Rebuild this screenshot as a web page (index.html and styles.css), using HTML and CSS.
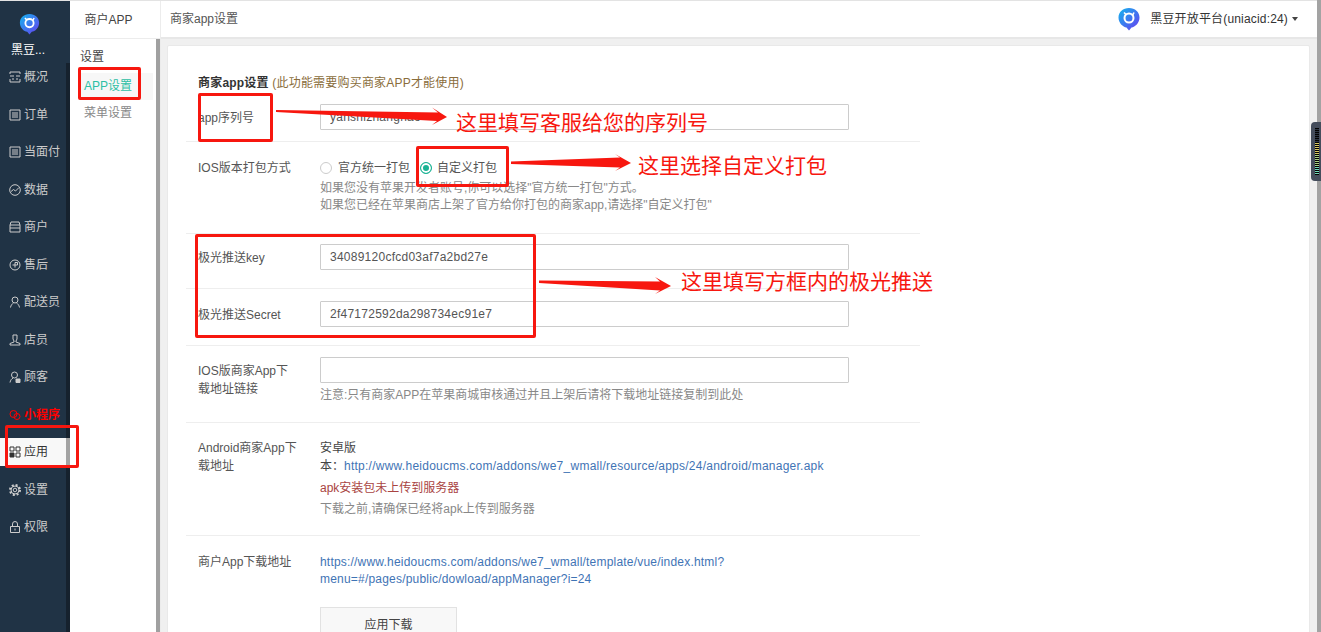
FILE: index.html
```html
<!DOCTYPE html>
<html lang="zh-CN">
<head>
  <meta charset="UTF-8" />
  <meta name="viewport" content="width=device-width, initial-scale=1.0"/>
  <title>商家app设置</title>
  <link rel="stylesheet" href="styles.css">
</head>
<body>

  <svg class="defs" width="0" height="0">
    <defs>
      <linearGradient id="logoGrad" x1="0" y1="0" x2="1" y2="1">
        <stop offset="0" stop-color="#12b5ee"/>
        <stop offset="1" stop-color="#6a3cf0"/>
      </linearGradient>
      <symbol id="logo" viewBox="0 0 22 24">
        <path d="M11 1C5 1 .5 5 .5 10.500S5 20 8.500 20.500L11 23.500L13.500 20.500C17 20 21.500 16 21.500 10.500S17 1 11 1Z" fill="url(#logoGrad)"/>
        <circle cx="11" cy="11" r="4.500" fill="none" stroke="#fff" stroke-width="2"/>
        <path d="M6 5.500l2 2M16 5.500l-1.500 3" stroke="#fff" stroke-width="1.600" fill="none"/>
      </symbol>
    </defs>
  </svg>

  <!-- Menu glowne -->
  <nav class="sidebar">
    <div class="brand">
      <svg class="brand-logo"><use href="#logo"/></svg>
      <div class="brand-name">黑豆...</div>
    </div>
    <ul class="menu">
      <li class="menu-item"><svg class="ico" viewBox="0 0 12 12"><path d="M1 3V1h10v2M1 5h4M7 5h4M1 8v3h10V8M3 8h2M7 8h2"/></svg>概况</li>
      <li class="menu-item"><svg class="ico" viewBox="0 0 12 12"><path d="M1 1h10v10H1zM3 4h6M3 6h6M3 8h6"/></svg>订单</li>
      <li class="menu-item"><svg class="ico" viewBox="0 0 12 12"><path d="M1 1h10v10H1zM3 4h6M3 6h6M3 8h6"/></svg>当面付</li>
      <li class="menu-item"><svg class="ico" viewBox="0 0 12 12"><circle cx="6" cy="6" r="5.300"/><path d="M2 7.500l2.500-2 2 1.500L10 3.500"/></svg>数据</li>
      <li class="menu-item"><svg class="ico" viewBox="0 0 12 12"><path d="M2 1h8l1 3H1zM1 4v7h10V4M1 7h10"/></svg>商户</li>
      <li class="menu-item"><svg class="ico" viewBox="0 0 12 12"><circle cx="6" cy="6" r="5"/><path d="M6 3.500h2.500V6H6zM3.500 6H6v2.500"/></svg>售后</li>
      <li class="menu-item"><svg class="ico" viewBox="0 0 12 12"><circle cx="6" cy="4" r="3"/><path d="M1.500 11.500C2 9 3 8 4.500 7M10.500 11.500C10 9 9 8 7.500 7"/></svg>配送员</li>
      <li class="menu-item"><svg class="ico" viewBox="0 0 12 12"><path d="M4 1h4v4L7 7v1l4 1.500V11H1V9.500L5 8V7L4 5z"/></svg>店员</li>
      <li class="menu-item"><svg class="ico" viewBox="0 0 12 12"><circle cx="5.500" cy="4" r="3"/><path d="M1 11.500C1.500 9 2.500 8 4 7"/><path class="ico-fill" d="M7 8h4v3.500H7z"/></svg>顾客</li>
      <li class="menu-item menu-item-red"><svg class="ico" viewBox="0 0 12 12"><circle cx="4.500" cy="5" r="3.500"/><circle cx="8" cy="7.500" r="3"/></svg>小程序</li>
      <li class="menu-item menu-item-active"><svg class="ico" viewBox="0 0 12 12"><path d="M1 1h4v4H1zM7 1h4v4H7zM7 7h4v4H7z"/><path class="ico-fill" d="M1 7h4v4H1z"/></svg>应用</li>
      <li class="menu-item"><svg class="ico" viewBox="0 0 12 12"><circle cx="6" cy="6" r="1.800"/><circle cx="6" cy="6" r="4"/><circle class="ico-teeth" cx="6" cy="6" r="5"/></svg>设置</li>
      <li class="menu-item"><svg class="ico" viewBox="0 0 12 12"><path d="M1.500 5.500h9V11.500h-9zM3.500 5.500V3a2.500 2.500 0 0 1 5 0v2.500M6 7.500v2"/></svg>权限</li>
    </ul>
  </nav>

  <!-- Menu drugiego poziomu -->
  <aside class="subnav">
    <div class="subnav-title">商户APP</div>
    <div class="subnav-body">
      <div class="subnav-group">设置</div>
      <a class="subnav-link subnav-link-active">APP设置</a>
      <a class="subnav-link">菜单设置</a>
    </div>
  </aside>

  <div class="main">
    <header class="topbar">
      <div class="crumb">商家app设置</div>
      <div class="account">
        <svg class="account-logo"><use href="#logo"/></svg>
        <span class="account-name">黑豆开放平台(uniacid:24)</span>
        <span class="caret"></span>
      </div>
    </header>

    <div class="content">
      <section class="card">
        <h3 class="card-title">商家app设置 <small>(此功能需要购买商家APP才能使用)</small></h3>

        <div class="row row-first">
          <label class="row-label">app序列号</label>
          <div class="row-field"><input class="text-input" type="text" value="yanshizhanghao"></div>
        </div>

        <div class="row row-radio">
          <label class="row-label">IOS版本打包方式</label>
          <div class="row-field">
            <div class="radios">
              <span class="radio"><i class="radio-dot"></i>官方统一打包</span>
              <span class="radio"><i class="radio-dot radio-dot-on"></i>自定义打包</span>
            </div>
            <p class="help">如果您没有苹果开发者账号,你可以选择"官方统一打包"方式。</p>
            <p class="help">如果您已经在苹果商店上架了官方给你打包的商家app,请选择"自定义打包"</p>
          </div>
        </div>

        <div class="row row-key">
          <label class="row-label">极光推送key</label>
          <div class="row-field"><input class="text-input" type="text" value="34089120cfcd03af7a2bd27e"></div>
        </div>

        <div class="row row-secret">
          <label class="row-label">极光推送Secret</label>
          <div class="row-field"><input class="text-input" type="text" value="2f47172592da298734ec91e7"></div>
        </div>

        <div class="row row-ios">
          <label class="row-label row-label-wrap">IOS版商家App下载地址链接</label>
          <div class="row-field">
            <input class="text-input" type="text">
            <p class="help help-below">注意:只有商家APP在苹果商城审核通过并且上架后请将下载地址链接复制到此处</p>
          </div>
        </div>

        <div class="row row-android">
          <label class="row-label row-label-wrap">Android商家App下载地址</label>
          <div class="row-field">
            <p class="line">安卓版</p>
            <p class="line">本：<a class="link">http://www.heidoucms.com/addons/we7_wmall/resource/apps/24/android/manager.apk</a></p>
            <p class="line line-danger">apk安装包未上传到服务器</p>
            <p class="help line-note">下载之前,请确保已经将apk上传到服务器</p>
          </div>
        </div>

        <div class="row row-last">
          <label class="row-label">商户App下载地址</label>
          <div class="row-field">
            <a class="link link-block">https://www.heidoucms.com/addons/we7_wmall/template/vue/index.html?menu=#/pages/public/dowload/appManager?i=24</a>
            <button class="btn">应用下载</button>
          </div>
        </div>
      </section>
    </div>
  </div>

  <!-- Gorny pasek i scrollbar strony -->
  <div class="top-strip"></div>
  <div class="page-scroll"></div>
  <div class="meter"><div class="meter-bars"></div></div>

  <!-- Adnotacje na zrzucie -->
  <div class="mark mark-serial"></div>
  <div class="mark mark-radio"></div>
  <div class="mark mark-push"></div>
  <div class="mark mark-appset"></div>
  <div class="mark mark-apply"></div>

  <svg class="arrows" width="1321" height="632" viewBox="0 0 1321 632">
    <path d="M276 110L438 112.500L432 107.500L447 117L432 125L437 121L276 112Z"/>
    <path d="M511 161.500L620 157.500L615 154L631 163L615 171L620 167.500L511 164Z"/>
    <path d="M539 280.500L660 281.500L655 277L671 286L655 294L660 290.500L539 283Z"/>
  </svg>
  <div class="note note-serial">这里填写客服给您的序列号</div>
  <div class="note note-radio">这里选择自定义打包</div>
  <div class="note note-push">这里填写方框内的极光推送</div>

</body>
</html>
```
FILE: styles.css
```css
* {
  box-sizing: border-box;
}

html, body {
  height: 100%;
}

body {
  margin: 0;
  height: 632px;
  overflow: hidden;
  display: flex;
  background-color: #f0f0f0;
  color: #555;
  font-family: "Liberation Sans", "Noto Sans CJK SC", sans-serif;
  font-size: 12px;
  line-height: 18px;
}

p {
  margin: 0;
}

.defs {
  position: absolute;
}

.top-strip {
  position: absolute;
  top: 0;
  left: 0;
  width: 100%;
  height: 1px;
  background-color: #e3e3e3;
}

.page-scroll {
  position: absolute;
  top: 0;
  right: 0;
  width: 4px;
  height: 632px;
  background-color: #a3a3a3;
}

.meter {
  position: absolute;
  top: 122px;
  right: 0;
  width: 10px;
  height: 59px;
  padding: 6px 0 6px 4px;
  background-color: #454d5c;
  border-radius: 4px 0 0 4px;
}

.meter-bars {
  width: 4px;
  height: 47px;
  background: repeating-linear-gradient(#000 0 1px, transparent 1px 2px),
    linear-gradient(#2b3340 0 30%, #d8c860 30% 55%, #a8d080 55% 80%, #70d8b8 80%);
}

/* sidebar */
.sidebar {
  width: 70px;
  height: 632px;
  flex-shrink: 0;
  background-color: #203345;
  background-image: linear-gradient(#16222e, #16222e);
  background-repeat: no-repeat;
  background-position: 66px 63px;
  background-size: 4px 569px;
  color: #ccc;
}

.brand {
  height: 57px;
  padding-top: 13px;
}

.brand-logo {
  display: block;
  width: 21px;
  height: 22px;
  margin-left: 19px;
}

.brand-name {
  margin-top: 6px;
  padding-left: 11px;
  color: #fff;
  font-size: 12px;
  line-height: 18px;
}

.menu {
  list-style: none;
  margin: 6px 0 0;
  padding: 0;
  width: 66px;
}

.menu-item {
  display: flex;
  align-items: center;
  height: 28px;
  margin-bottom: 9.500px;
  padding-left: 9px;
  white-space: nowrap;
}

.ico {
  width: 12px;
  height: 12px;
  margin-right: 3px;
  flex-shrink: 0;
  fill: none;
  stroke: currentColor;
  stroke-width: 1;
}

.ico-fill {
  fill: currentColor;
}

.ico-teeth {
  stroke-width: 2;
  stroke-dasharray: 2 1.930;
}

.menu-item-red {
  color: #f00;
  font-weight: bold;
}

.menu-item-active {
  background-color: #f8f8f8;
  box-shadow: 4px 0 0 #a3a3a3;
  color: #333;
}

/* subnav */
.subnav {
  width: 91px;
  height: 632px;
  flex-shrink: 0;
  background-color: #fff;
  border-right: 1px solid #ececec;
  color: #555;
}

.subnav-title {
  height: 39px;
  padding: 11px 13px 0 0;
  text-align: center;
  color: #444;
  border-bottom: 1px solid #ececec;
}

.subnav-body {
  height: 593px;
  padding: 9px 3px 0 10px;
  border-right: 4px solid #a0a0a0;
}

.subnav-group {
  margin-bottom: 7px;
  color: #444;
  line-height: 18px;
}

.subnav-link {
  display: block;
  height: 27px;
  padding-left: 4px;
  color: #888;
  line-height: 27px;
}

.subnav-link-active {
  background-color: #f7f7f7;
  color: #2ebfa5;
}

/* main */
.main {
  flex: 1;
  min-width: 0;
  height: 632px;
  display: flex;
  flex-direction: column;
}

.topbar {
  height: 39px;
  flex-shrink: 0;
  display: flex;
  justify-content: space-between;
  align-items: center;
  padding: 0 23px 0 9px;
  background-color: #fff;
  border-bottom: 2px solid #e7e7e7;
  color: #555;
}

.account {
  display: flex;
  align-items: center;
  color: #333;
}

.account-name {
  letter-spacing: .17px;
}

.account-logo {
  width: 22px;
  height: 24px;
  margin-right: 10px;
}

.caret {
  width: 0;
  height: 0;
  margin-left: 4px;
  border-top: 4px solid #444;
  border-left: 3px solid transparent;
  border-right: 3px solid transparent;
}

.content {
  flex: 1;
  min-height: 0;
  padding: 6px 11px 0 6px;
  overflow: hidden;
}

.card {
  width: 1143px;
  height: 700px;
  padding: 28px 0 0 18px;
  background-color: #fff;
  border: 1px solid #e9e9e9;
  border-radius: 2px;
}

.card-title {
  margin: 0 0 4px 12px;
  color: #333;
  font-size: 12px;
  font-weight: bold;
  line-height: 18px;
  letter-spacing: .2px;
}

.card-title small {
  color: #8a6d3b;
  font-size: 12px;
  font-weight: normal;
}

.row {
  display: flex;
  width: 734px;
  padding-left: 12px;
  border-bottom: 1px solid #eee;
}

.row-first {
  padding-top: 8px;
  padding-bottom: 11px;
}

.row-radio {
  padding-top: 17px;
  padding-bottom: 19px;
}

.row-key {
  padding-top: 10px;
  padding-bottom: 18px;
}

.row-secret {
  padding-top: 12px;
  padding-bottom: 18px;
}

.row-ios {
  padding-top: 11px;
  padding-bottom: 18px;
}

.row-android {
  padding-top: 16px;
  padding-bottom: 17px;
}

.row-last {
  padding-top: 17px;
  border-bottom: none;
}

.row-label {
  width: 122px;
  padding-top: 5px;
  flex-shrink: 0;
  color: #555;
  white-space: nowrap;
}

.row-radio .row-label,
.row-android .row-label,
.row-last .row-label {
  padding-top: 0;
}

.row-label-wrap {
  white-space: normal;
  padding-right: 20px;
}

.row-field {
  width: 529px;
}

.text-input {
  display: block;
  width: 529px;
  height: 26px;
  padding: 0 9px;
  border: 1px solid #ccc;
  border-radius: 1px;
  background-color: #fff;
  color: #555;
  font: inherit;
  letter-spacing: .25px;
}

.radios {
  display: flex;
  height: 18px;
  margin-bottom: 3px;
}

.radio {
  display: flex;
  align-items: center;
  margin-right: 10px;
  color: #555;
}

.radio-dot {
  width: 12px;
  height: 12px;
  margin-right: 6px;
  border: 1px solid #ccc;
  border-radius: 50%;
}

.radio-dot-on {
  margin-right: 5px;
  border-color: #1ab394;
  background-color: #1ab394;
  box-shadow: inset 0 0 0 2px #fff;
}

.help {
  color: #888;
  line-height: 17px;
}

.help-below {
  margin-top: 4px;
}

.line {
  color: #444;
  line-height: 18px;
}

.line-danger {
  margin-top: 4px;
  color: #a94442;
}

.line-note {
  margin-top: 3px;
  line-height: 18px;
}

.link {
  color: #3f74b5;
  letter-spacing: .25px;
}

.link-block {
  display: block;
  width: 420px;
  padding-top: 1px;
  line-height: 17px;
  letter-spacing: .2px;
}

.btn {
  display: block;
  width: 137px;
  height: 36px;
  margin-top: 19px;
  background-color: #f8f8f8;
  border: 1px solid #e2e2e2;
  color: #444;
  font: inherit;
}

/* annotations */
.mark {
  position: absolute;
  border: 3px solid #f7170f;
  border-radius: 2px;
}

.mark-serial {
  left: 198px;
  top: 93px;
  width: 75px;
  height: 49px;
}

.mark-radio {
  left: 416px;
  top: 146px;
  width: 93px;
  height: 41px;
}

.mark-push {
  left: 195px;
  top: 234px;
  width: 341px;
  height: 104px;
}

.mark-appset {
  left: 78px;
  top: 67px;
  width: 63px;
  height: 33px;
}

.mark-apply {
  left: 5px;
  top: 425px;
  width: 74px;
  height: 43px;
}

.arrows {
  position: absolute;
  top: 0;
  left: 0;
  fill: #f7170f;
}

.note {
  position: absolute;
  color: #f7170f;
  font-size: 21px;
  line-height: 26px;
  white-space: nowrap;
}

.note-serial {
  left: 456px;
  top: 110px;
}

.note-radio {
  left: 638px;
  top: 153px;
}

.note-push {
  left: 681px;
  top: 269px;
}
```
